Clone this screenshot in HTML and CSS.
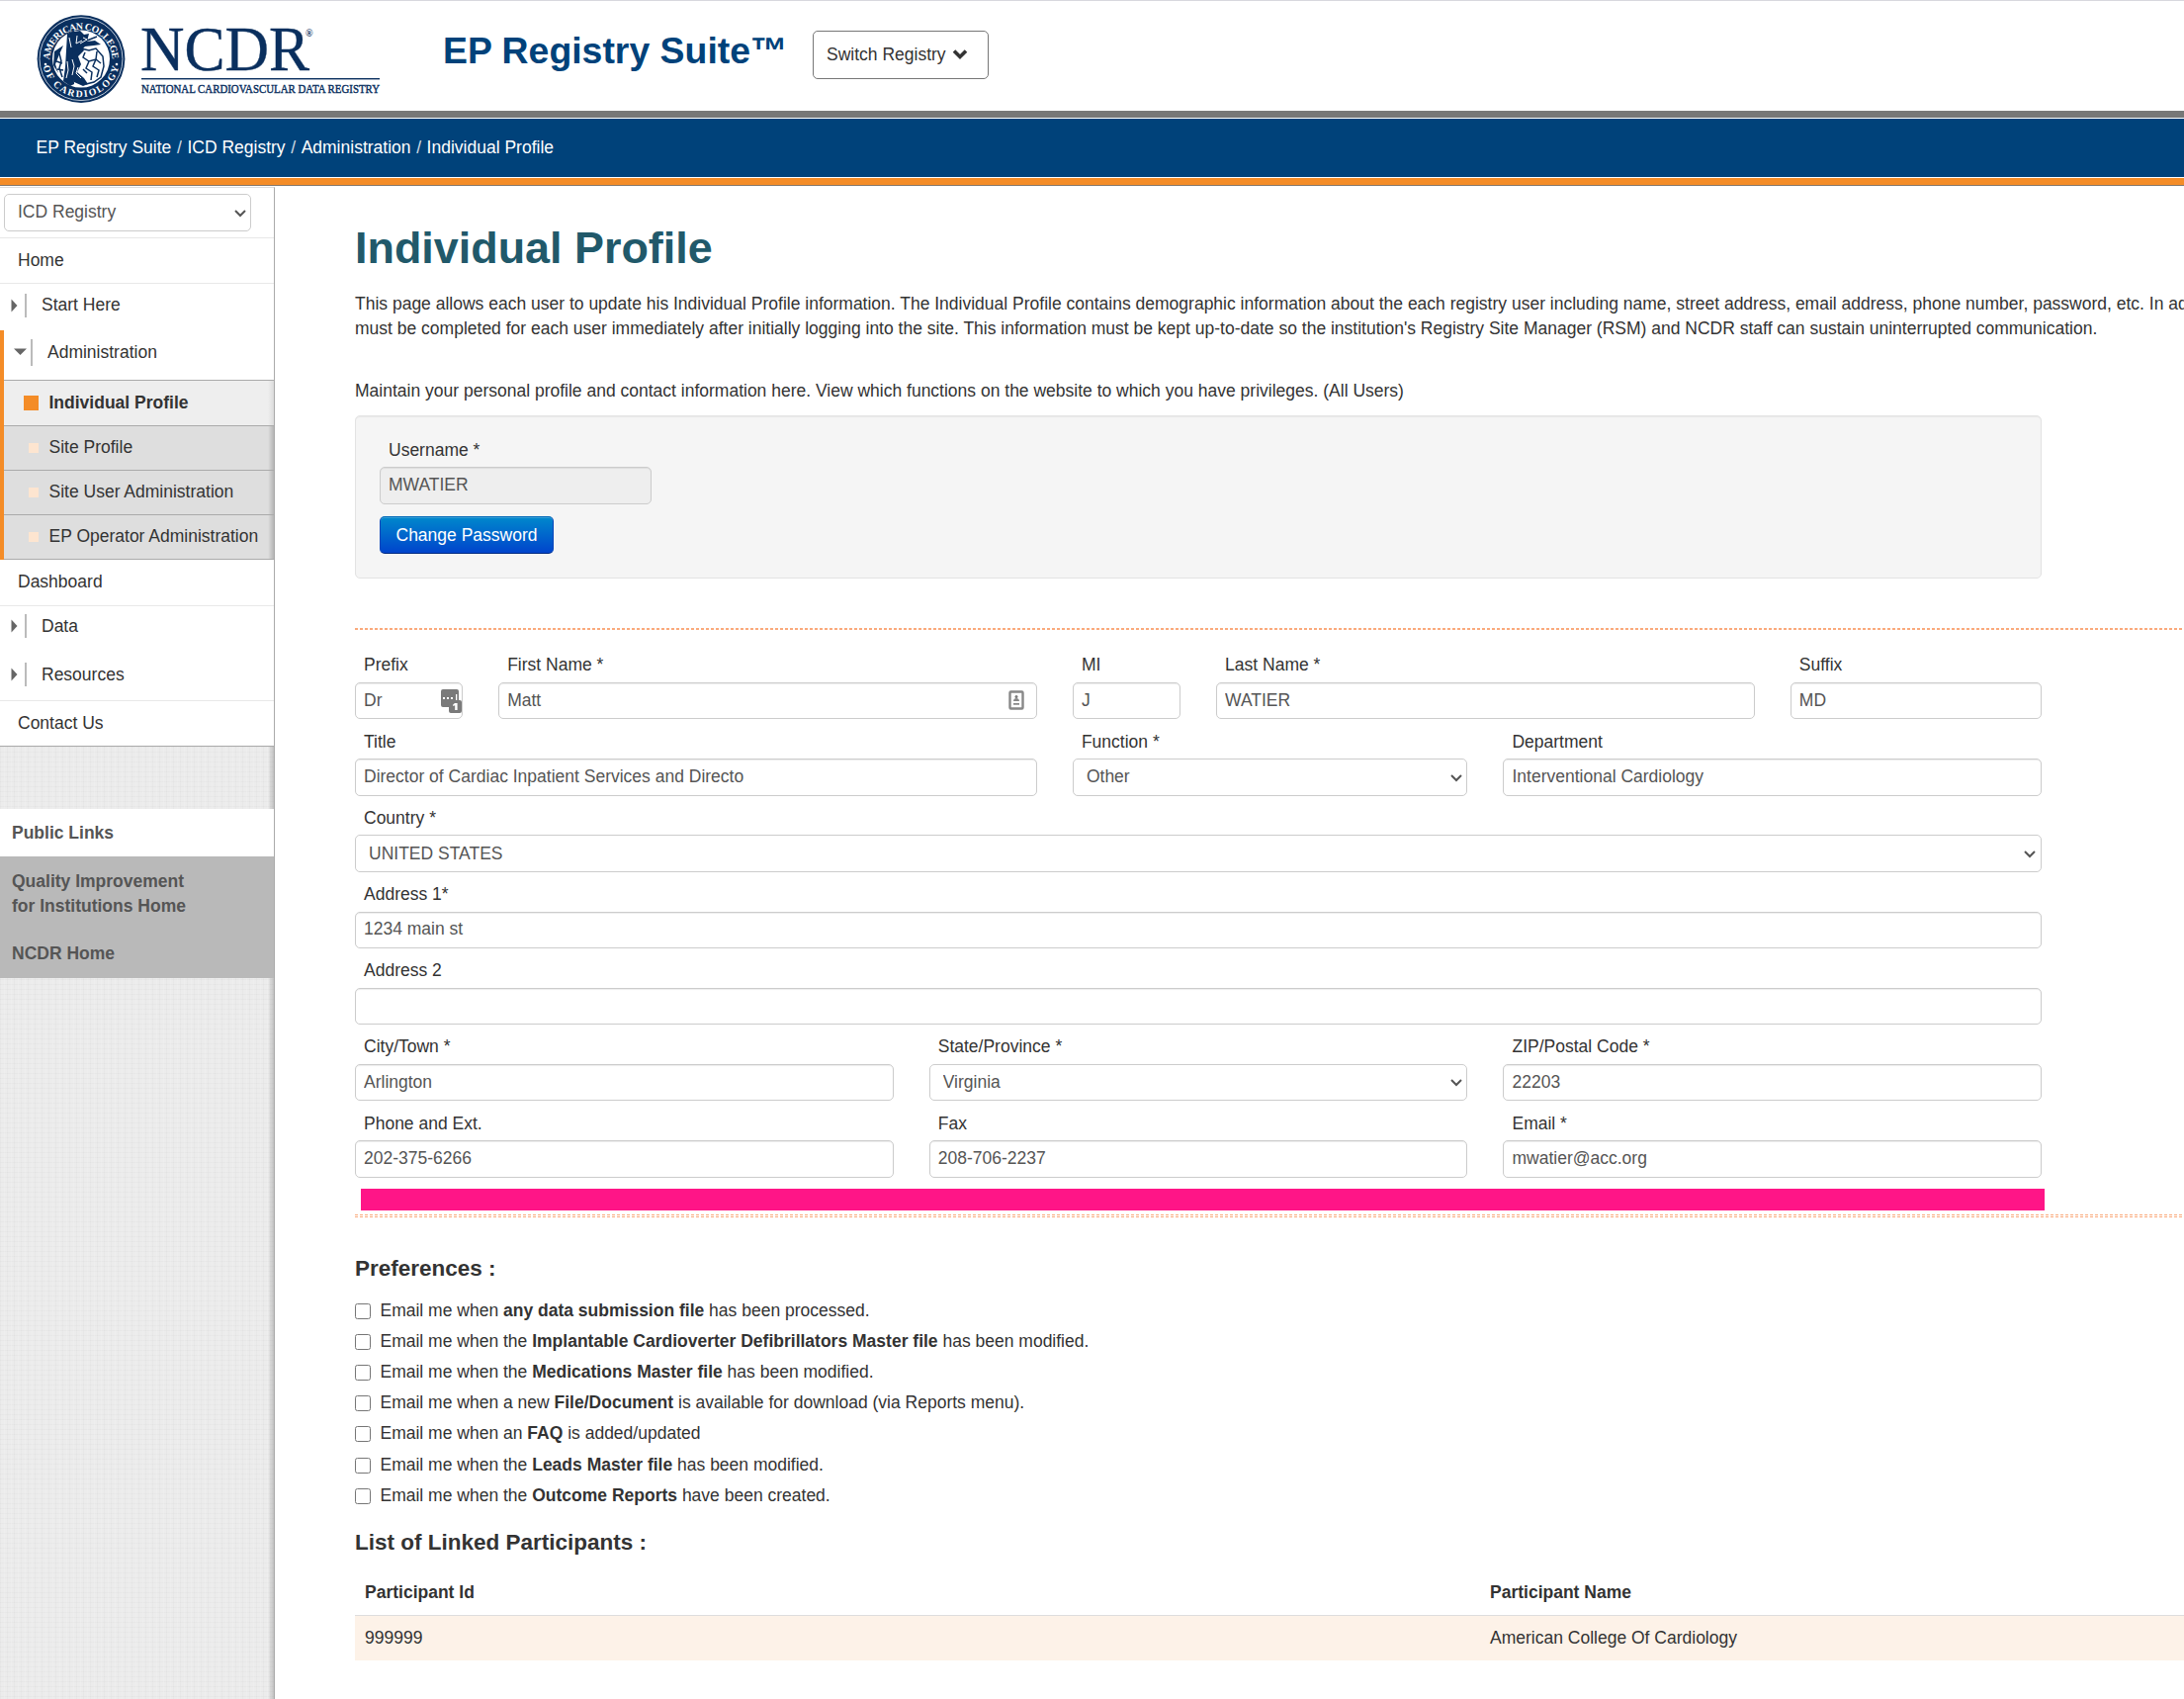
FILE: index.html
```html
<!DOCTYPE html>
<html lang="en">
<head>
<meta charset="utf-8">
<title>Individual Profile - EP Registry Suite</title>
<link rel="stylesheet" href="styles.css">
</head>
<body>
<header class="header">
  <svg class="logo" width="360" height="100" viewBox="37 10 360 100" role="img" aria-label="NCDR National Cardiovascular Data Registry">
    <defs>
      <path id="arc-top" d="M50.300 61.500A31.700 31.700 0 1 1 113.700 61.500"/>
      <path id="arc-bottom" d="M43.300 64A39 39 0 0 0 120.700 64"/>
    </defs>
    <circle cx="82" cy="59.600" r="44.400" fill="#0a2f5e"/>
    <circle cx="82" cy="59.600" r="42" fill="none" stroke="#b9c6d6" stroke-width="1"/>
    <circle cx="82" cy="59.600" r="29" fill="#fff"/>
    <text class="seal-text"><textPath href="#arc-top" textLength="97" startOffset="1">AMERICAN COLLEGE</textPath></text>
    <text class="seal-text"><textPath href="#arc-bottom" textLength="106" startOffset="3">OF CARDIOLOGY</textPath></text>
    <circle cx="46" cy="65" r="1.300" fill="#fff"/>
    <circle cx="118" cy="65" r="1.300" fill="#fff"/>
    <g fill="#0a2f5e">
      <path d="M68 34l7-3 1 20-2 8 1 26-4 2-7-5 2-14 1-17z"/>
      <path d="M75 32l6-1 4 4 5-1-2 8 8-1 6 4-7 1-9 1-5 5-8 3z"/>
      <path d="M55 52l9-6-4 9-4 10 3 9-5-8z"/>
      <path d="M74 53l9-5 2 3-6 6 3 8-4 8 7 6 4 6-5 2-9-4-4-9 3-6z"/>
    </g>
    <g fill="none" stroke="#0a2f5e" stroke-width="1.500">
      <path d="M82 49l8 2 7-2 7 8 1 10-3 11-7 5-8 2M86 53l-2 5 6 4 7-2 5 4M90 62l-3 7 6 4-1 8M98 52l-1 8M97 60l-3 7 6 4-2 7"/>
      <path d="M60 54l2 8-2 7 3 9M57 62l6 2M58 70l6 1M84 70l4 4M88 41l10-4"/>
    </g>
    <g fill="none" stroke="#fff" stroke-width="1">
      <path d="M70 38l2 10M78 36l-1 8 6-3M73 60l2 7-2 9M68 62l1 9-2 8M79 68l-2 6 5 5M84 38l4 2-7 4"/>
    </g>
    <text class="logo-name" x="142" y="70.500" textLength="171" lengthAdjust="spacingAndGlyphs">NCDR</text>
    <text class="logo-reg" x="309" y="36.500">®</text>
    <rect x="143" y="79" width="241" height="1.400" fill="#0a2f5e"/>
    <text class="logo-sub" x="143" y="94" textLength="241" lengthAdjust="spacingAndGlyphs">NATIONAL CARDIOVASCULAR DATA REGISTRY</text>
  </svg>
  <div class="suite">EP Registry Suite<span class="tm">™</span></div>
  <button class="switch" type="button">Switch Registry
    <svg width="16" height="12" viewBox="0 0 16 12"><path d="M2 2.500l6 6 6-6" fill="none" stroke="#333" stroke-width="3.600"/></svg>
  </button>
</header>
<nav class="crumbs"><a>EP Registry Suite</a><i>/</i><a>ICD Registry</a><i>/</i><a>Administration</a><i>/</i><a>Individual Profile</a></nav>
<div class="orange"></div>
<div class="page">
  <aside class="side">
    <div class="pick">
      <div class="select"><select><option>ICD Registry</option></select><svg class="chev" viewBox="0 0 12 8"><path d="M1 1l5 5 5-5"/></svg></div>
    </div>
    <a class="item home">Home</a>
    <a class="item group start"><svg class="tri" width="7" height="14" viewBox="0 0 7 14"><path d="M0.500 0.500L6.500 7 0.500 13.500z"/></svg><b class="bar"></b>Start Here</a>
    <div class="open">
      <a class="group admin"><svg class="tri" width="13" height="8" viewBox="0 0 13 8"><path d="M0 0.500h13L6.500 7z"/></svg><b class="bar"></b>Administration</a>
      <a class="sub active"><b class="sq"></b>Individual Profile</a>
      <a class="sub"><b class="sq"></b>Site Profile</a>
      <a class="sub"><b class="sq"></b>Site User Administration</a>
      <a class="sub"><b class="sq"></b>EP Operator Administration</a>
    </div>
    <a class="item dash">Dashboard</a>
    <a class="item group data"><svg class="tri" width="7" height="14" viewBox="0 0 7 14"><path d="M0.500 0.500L6.500 7 0.500 13.500z"/></svg><b class="bar"></b>Data</a>
    <a class="item group res"><svg class="tri" width="7" height="14" viewBox="0 0 7 14"><path d="M0.500 0.500L6.500 7 0.500 13.500z"/></svg><b class="bar"></b>Resources</a>
    <a class="item contact">Contact Us</a>
    <div class="public">Public Links</div>
    <div class="links"><a>Quality Improvement<br>for Institutions Home</a><a>NCDR Home</a></div>
  </aside>
  <main class="main">
    <h1>Individual Profile</h1>
    <p class="intro">This page allows each user to update his Individual Profile information. The Individual Profile contains demographic information about the each registry user including name, street address, email address, phone number, password, etc. In ad<br>must be completed for each user immediately after initially logging into the site. This information must be kept up-to-date so the institution's Registry Site Manager (RSM) and NCDR staff can sustain uninterrupted communication.</p>
    <p class="maintain">Maintain your personal profile and contact information here. View which functions on the website to which you have privileges. (All Users)</p>
    <section class="well">
      <label>Username *</label>
      <input class="user" value="MWATIER" disabled>
      <button class="change" type="button">Change Password</button>
    </section>
    <div class="dots"></div>
    <form class="form">
      <div class="field c1"><label>Prefix</label><input value="Dr">
        <svg class="pw" width="22" height="24" viewBox="0 0 22 24"><path fill="#7a7a7a" d="M2 0h14a2 2 0 0 1 2 2v9h1a2 2 0 0 1 2 2v9a2 2 0 0 1-2 2h-9a2 2 0 0 1-2-2v-4H2a2 2 0 0 1-2-2V2a2 2 0 0 1 2-2z"/><path fill="#fff" d="M2 8h2v2H2zM6 8h2v2H6zM10 8h2v2h-2zM15 5h1.300v6H15zM14 14h2.600v7H14.200v-4.800l-2 .8v-1.600z"/></svg></div>
      <div class="field c4"><label>First Name *</label><input value="Matt">
        <svg class="card" width="16" height="20" viewBox="0 0 16 20"><rect x="1.500" y="1.500" width="13" height="17" rx="1" fill="#fff" stroke="#888" stroke-width="2.400"/><circle cx="8" cy="6.500" r="1.500" fill="#777"/><path d="M5 11c0-4 6-4 6 0zM5 13h6v1.800H5z" fill="#888"/></svg></div>
      <div class="field c1"><label>MI</label><input value="J"></div>
      <div class="field c4"><label>Last Name *</label><input value="WATIER"></div>
      <div class="field c2"><label>Suffix</label><input value="MD"></div>
      <div class="field c5"><label>Title</label><input value="Director of Cardiac Inpatient Services and Directo"></div>
      <div class="field c3"><label>Function *</label><div class="select"><select><option>Other</option></select><svg class="chev" viewBox="0 0 12 8"><path d="M1 1l5 5 5-5"/></svg></div></div>
      <div class="field c4"><label>Department</label><input value="Interventional Cardiology"></div>
      <div class="field c12"><label>Country *</label><div class="select"><select><option>UNITED STATES</option></select><svg class="chev" viewBox="0 0 12 8"><path d="M1 1l5 5 5-5"/></svg></div></div>
      <div class="field c12"><label>Address 1*</label><input value="1234 main st"></div>
      <div class="field c12"><label>Address 2</label><input value=""></div>
      <div class="field c4"><label>City/Town *</label><input value="Arlington"></div>
      <div class="field c4"><label>State/Province *</label><div class="select"><select><option>Virginia</option></select><svg class="chev" viewBox="0 0 12 8"><path d="M1 1l5 5 5-5"/></svg></div></div>
      <div class="field c4"><label>ZIP/Postal Code *</label><input value="22203"></div>
      <div class="field c4"><label>Phone and Ext.</label><input value="202-375-6266"></div>
      <div class="field c4"><label>Fax</label><input value="208-706-2237"></div>
      <div class="field c4"><label>Email *</label><input value="mwatier@acc.org"></div>
    </form>
    <div class="pink"></div>
    <div class="dashes"></div>
    <h2>Preferences :</h2>
    <ul class="prefs">
      <li><input type="checkbox"><span>Email me when <b>any data submission file</b> has been processed.</span></li>
      <li><input type="checkbox"><span>Email me when the <b>Implantable Cardioverter Defibrillators Master file</b> has been modified.</span></li>
      <li><input type="checkbox"><span>Email me when the <b>Medications Master file</b> has been modified.</span></li>
      <li><input type="checkbox"><span>Email me when a new <b>File/Document</b> is available for download (via Reports menu).</span></li>
      <li><input type="checkbox"><span>Email me when an <b>FAQ</b> is added/updated</span></li>
      <li><input type="checkbox"><span>Email me when the <b>Leads Master file</b> has been modified.</span></li>
      <li><input type="checkbox"><span>Email me when the <b>Outcome Reports</b> have been created.</span></li>
    </ul>
    <h2 class="linked">List of Linked Participants :</h2>
    <table class="table">
      <tr><th class="pid">Participant Id</th><th>Participant Name</th></tr>
      <tr><td>999999</td><td>American College Of Cardiology</td></tr>
    </table>
  </main>
</div>
</body>
</html>
```
FILE: styles.css
```css
* { box-sizing: border-box; }
body { margin: 0; height: 1718px; overflow: hidden; background: #fff; color: #333; font: 17.5px/25px "Liberation Sans", Arial, sans-serif; display: flex; flex-direction: column; }
input, select, button { font: inherit; color: #555; margin: 0; }

.header { height: 120px; flex: none; border-top: 1px solid #d8d8de; border-bottom: 1px solid #fff; display: flex; align-items: flex-start; padding-left: 37px; box-shadow: inset 0 -7px #777; }
.logo { margin-top: 9px; flex: none; overflow: visible; }
.seal-text { font: bold 9.8px "Liberation Serif", serif; fill: #fff; }
.logo-name { font: 64px "Liberation Serif", serif; fill: #0a2f5e; stroke: #0a2f5e; stroke-width: .4px; }
.logo-reg { font: bold 10px "Liberation Serif", serif; fill: #0a2f5e; }
.logo-sub { font: 13px "Liberation Serif", serif; fill: #0a2f5e; stroke: #0a2f5e; stroke-width: .45px; }
.suite { margin: 29px 0 0 51px; width: 374px; font-size: 37.4px; font-weight: bold; line-height: 42px; color: #00427a; white-space: nowrap; }
.tm { font-weight: bold; }
.switch { margin-top: 30px; height: 49px; width: 178px; padding: 0 0 1px 13px; border: 1px solid #777; border-radius: 5px; background: #fff; color: #333; display: flex; align-items: center; gap: 6px; white-space: nowrap; }

.crumbs { height: 60px; flex: none; background: #00427a; border-bottom: 1px solid #fff; color: #fff; padding: 17px 0 0 36.5px; white-space: nowrap; }
.crumbs i { font-style: normal; margin: 0 5.6px; opacity: .8; }
.orange { height: 8px; flex: none; background: #f48c27; border-bottom: 1px solid #84786c; }

.page { flex: 1; display: flex; min-height: 0; }
.side { width: 278px; flex: none; margin-top: 1px; border-top: 1px solid #ddd; border-right: 1px solid #aaa; background:
  linear-gradient(to left, #0000002e, #00000000 6px),
  repeating-linear-gradient(90deg, #00000005 0 1px, #00000000 1px 4px, #ffffff20 4px 5px, #00000000 5px 7px),
  repeating-linear-gradient(#00000005 0 1px, #00000000 1px 5px), #ececec; display: flex; flex-direction: column; white-space: nowrap; }
.pick { height: 51px; background: #fff; border-bottom: 1px solid #e8e8e8; padding: 6px 0 0 4px; }
.pick .select { width: 250px; }
.item { background: #fff; display: block; }
.home { height: 46px; border-bottom: 1px solid #e8e8e8; padding: 10px 0 0 18px; }
.group { display: flex; align-items: center; background: #fff; }
.tri { fill: #666; margin-left: 11px; flex: none; }
.bar { width: 2px; height: 24px; background: #bbb; }
.group .bar { margin: 0 15px 0 7px; }
.start { height: 47px; padding-bottom: 4px; }
.open { border-left: 4px solid #f48c27; height: 232px; }
.admin { height: 50px; border-bottom: 0; padding-bottom: 6px; }
.admin .tri { margin-left: 10px; }
.group.admin .bar { height: 27px; margin-left: 4px; }
.sub { display: flex; align-items: center; height: 45px; padding: 0 0 2px 45.5px; border-top: 1px solid #aaa; background: linear-gradient(to left, #00000030, #00000000 6px), #dedede; position: relative; }
.sub:last-child { height: 46px; border-bottom: 1px solid #aaa; padding-bottom: 2px; }
.sub.active { height: 46px; padding-bottom: 1px; background: linear-gradient(to left, #00000014, #00000000 6px), #eee; font-weight: bold; }
.sub .sq { position: absolute; left: 25px; top: 17px; width: 10px; height: 10px; background: #fde5d0; }
.sub.active .sq { left: 20px; top: 15px; width: 15px; height: 15px; background: #f48c27; }
.dash { height: 47px; padding: 10px 0 0 18px; border-bottom: 1px solid #e8e8e8; }
.data { height: 44px; padding-bottom: 4px; }
.res { height: 52px; padding-bottom: 1px; border-bottom: 1px solid #e8e8e8; }
.contact { height: 46px; padding: 10px 0 0 18px; border-bottom: 1px solid #aaa; }
.public { margin-top: 63px; height: 48px; background: #fff; padding: 12px 0 0 12px; font-weight: bold; color: #555; }
.links { height: 123px; background: #b9b9b9; padding: 13px 0 0 12px; font-weight: bold; color: #555; display: flex; flex-direction: column; gap: 23px; }

.main { flex: 1; min-width: 0; overflow: hidden; padding-left: 81px; }
h1 { margin: 38px 0 0; font-size: 44.9px; line-height: 50px; color: #21596a; }
p { margin: 0; white-space: nowrap; }
.intro { margin-top: 19px; }
.maintain { margin-top: 38px; }
.well { width: 1706px; height: 165px; margin-top: 12px; padding: 22px 24px; border: 1px solid #e3e3e3; border-radius: 5px; background: #f5f5f5; box-shadow: inset 0 1px 1px #0000000d; display: flex; flex-direction: column; align-items: flex-start; }
label { display: block; padding-left: 9px; }
input:not([type]), .select select { height: 37.5px; border: 1px solid #ccc; border-radius: 5px; background: #fff; }
input:not([type]) { width: 100%; display: block; padding: 0 8px 1px 8px; box-shadow: inset 0 1px 1px #00000013; }
.well .user { width: 275px; height: 38px; margin-top: 4px; padding-bottom: 1px; background: #eee; }
.change { margin-top: 12px; width: 176px; height: 38px; padding: 0; border: 1px solid #04b; border-color: #0068b8 #04b #002a80; border-radius: 5px; color: #fff; background: linear-gradient(#08c, #04c); box-shadow: inset 0 1px #ffffff33; white-space: nowrap; }
.dots { margin-top: 50px; height: 2px; background: repeating-linear-gradient(90deg, #faaa7c 0 3px, #fff 3px 5px); }
.form { margin-top: 22px; width: 1706px; display: grid; grid-template-columns: repeat(12, 1fr); column-gap: 36.2px; grid-auto-rows: 77.2px; }
.field { position: relative; min-width: 0; }
.field label { padding-top: 1.4px; margin-bottom: 4.6px; }
.c1 { grid-column: span 1; } .c2 { grid-column: span 2; } .c3 { grid-column: span 3; } .c4 { grid-column: span 4; } .c5 { grid-column: span 5; } .c12 { grid-column: span 12; }
.select { position: relative; }
.select select { display: block; width: 100%; appearance: none; padding: 0 30px 0 13px; }
.chev { position: absolute; right: 5.5px; top: 15.5px; width: 12px; height: 8px; fill: none; stroke: #555; stroke-width: 2; }
.pw { position: absolute; left: 87px; top: 38px; }
.card { position: absolute; right: 13px; top: 39px; }
.pink { margin: 2.4px 0 0 6px; width: 1703px; height: 22px; background: #ff1587; }
.dashes { margin-top: 4px; height: 3px; background: linear-gradient(#ffffff00 1px, #fff 1px 2px, #ffffff00 2px), repeating-linear-gradient(90deg, #faaa7c 0 3px, #fff 3px 5px); }
h2 { margin: 36px 0 0; font-size: 22.5px; line-height: 32px; }
.prefs { margin: 14px 0 0; padding: 0; list-style: none; }
.prefs li { height: 31.2px; display: flex; align-items: flex-start; white-space: nowrap; }
.prefs input { width: 16px; height: 16px; margin: 5px 9.5px 0 0; flex: none; }
.linked { margin-top: 13px; }
.table { width: 2276px; margin-top: 13px; border-collapse: collapse; table-layout: fixed; }
.table th { height: 44px; padding: 0 10px 1px; text-align: left; }
.table td { height: 46px; padding: 0 10px; background: #fdf2e8; border-top: 1px solid #ddd; }
```
